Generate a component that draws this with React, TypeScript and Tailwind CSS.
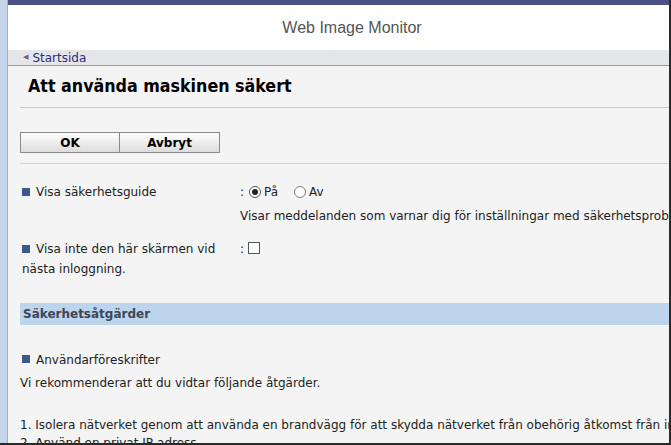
import React from "react";

const F = { fontFamily: '"DejaVu Sans", Verdana, sans-serif' };
const FC = { fontFamily: '"DejaVu Sans Condensed", "DejaVu Sans", sans-serif' };

function Bullet() {
  return <span className="inline-block w-[8px] h-[8px] bg-[#3c5a8c] mr-[6px] align-middle relative top-[-1px]" />;
}

export default function App() {
  return (
    <div className="w-[671px] h-[445px] overflow-hidden flex bg-[#f4f4f4] border-r-2 border-b-2 border-[#2a2a2a]" style={F}>
      <div className="w-[8px] shrink-0 bg-[#c4d5ea] border-r border-[#9fb2cc]" />
      <div className="flex-1 flex flex-col min-w-0">
        <div className="h-[5px] bg-[#4b5283] shrink-0" />
        <div className="h-[45px] bg-white flex items-center justify-center pl-[27px] shrink-0">
          <span className="text-[16px] text-[#555]" style={{ fontFamily: '"Liberation Sans", Arial, sans-serif' }}>Web Image Monitor</span>
        </div>
        <div className="h-[16px] bg-[#e5e6ea] border-b border-[#9a9a9a] flex items-center pl-[15px] shrink-0">
          <span className="text-[7px] text-[#666] mr-[4px]">◀</span>
          <span className="text-[12px] text-[#2b2b7d] leading-none">Startsida</span>
        </div>
        <div className="flex-1 pl-[12px] text-[12px] text-[#222] whitespace-nowrap">
          <div className="border-b border-[#c8c8c8] h-[42px] flex items-center pl-[8px]">
            <span className="text-[17.7px] font-bold text-black" style={FC}>Att använda maskinen säkert</span>
          </div>
          <div className="mt-[24px] flex">
            <button className="w-[100px] h-[21px] border border-[#8a8a8a] bg-gradient-to-b from-white to-[#dcdcdc] font-bold text-[12px] text-black">OK</button>
            <button className="w-[100px] h-[21px] border border-l-0 border-[#8a8a8a] bg-gradient-to-b from-white to-[#dcdcdc] font-bold text-[12px] text-black">Avbryt</button>
          </div>
          <div className="mt-[10px] border-b border-[#d4d4d4]" />
          <div className="mt-[19px] flex h-[18px] items-center">
            <div className="w-[220px] pl-[2px]"><Bullet />Visa säkerhetsguide</div>
            <div className="flex items-center">
              <span className="mr-[5px]">:</span>
              <span className="w-[12px] h-[12px] rounded-full border border-[#555] bg-white flex items-center justify-center mr-[3px]">
                <span className="w-[6px] h-[6px] rounded-full bg-[#222]" />
              </span>
              <span>På</span>
              <span className="w-[12px] h-[12px] rounded-full border border-[#777] bg-white ml-[16px] mr-[3px]" />
              <span>Av</span>
            </div>
          </div>
          <div className="mt-[6px] pl-[220px] h-[18px] flex items-center">Visar meddelanden som varnar dig för inställningar med säkerhetsproblem.</div>
          <div className="mt-[14px] flex">
            <div className="w-[220px] pl-[2px] leading-[20px]">
              <div><Bullet />Visa inte den här skärmen vid</div>
              <div>nästa inloggning.</div>
            </div>
            <div className="flex items-start pt-[1px]">
              <span className="mr-[4px]">:</span>
              <span className="w-[12px] h-[12px] border border-[#555] bg-white mt-[2px]" />
            </div>
          </div>
          <div className="mt-[24px] h-[22px] bg-[#bcd4ec] flex items-center pl-[3px]">
            <span className="font-bold text-[#3c4658]">Säkerhetsåtgärder</span>
          </div>
          <div className="mt-[26px] h-[18px] flex items-center pl-[2px]"><Bullet />Användarföreskrifter</div>
          <div className="mt-[5px] h-[18px] flex items-center">Vi rekommenderar att du vidtar följande åtgärder.</div>
          <div className="mt-[24px] h-[18px] flex items-center">1. Isolera nätverket genom att använda en brandvägg för att skydda nätverket från obehörig åtkomst från internet.</div>
          <div className="h-[18px] flex items-center">2. Använd en privat IP-adress.</div>
        </div>
      </div>
    </div>
  );
}
